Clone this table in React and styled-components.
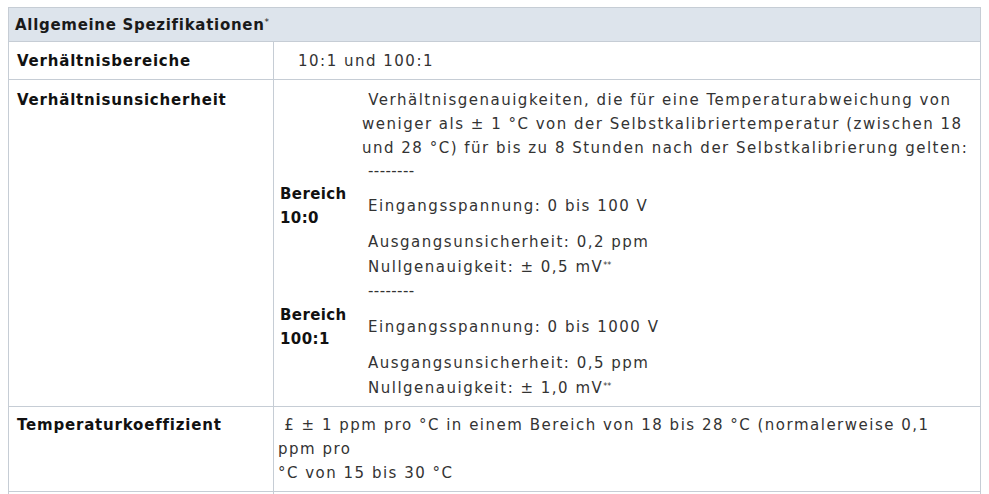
import React from 'react'
import styled, { createGlobalStyle } from 'styled-components'

const GlobalStyle = createGlobalStyle`
    body {
        margin: 7px 8px 8px 8px;
        background: #ffffff;
        font-family: "DejaVu Sans", Verdana, sans-serif;
        color: #222;
    }
`

const SpecTable = styled.table`
    width: 100%;
    border-collapse: collapse;
    font-size: 15px;
`

const HeadCell = styled.th`
    background: #dde4ec;
    border: 1px solid #c6cdd5;
    text-align: left;
    font-weight: bold;
    font-size: 15px;
    letter-spacing: 0.7px;
    height: 32px;
    padding: 1px 6px 0 6px;
    color: #1a1a1a;
    sup {
        font-size: 9px;
        font-weight: normal;
        letter-spacing: 0;
        vertical-align: 5px;
    }
`

const LabelCell = styled.td`
    width: 248px;
    border: 1px solid #c6cdd5;
    vertical-align: top;
    font-weight: bold;
    font-size: 15px;
    letter-spacing: 0.8px;
    line-height: 24px;
    padding: ${p => p.$pt || 7}px 8px 6px 8px;
    color: #111;
`

const ValueCell = styled.td`
    border: 1px solid #c6cdd5;
    vertical-align: top;
    line-height: 24px;
    letter-spacing: 1.5px;
    padding: ${p => p.$pt || 7}px 8px 6px ${p => p.$pl || 6}px;
    color: #333;
`

const Nested = styled.div`
    display: grid;
    grid-template-columns: 82px 1fr;
    align-items: center;
`

const RangeLabel = styled.div`
    grid-column: 1;
    font-weight: bold;
    letter-spacing: 0.4px;
    color: #111;
    line-height: 24px;
`

const RangeText = styled.div`
    grid-column: 2;
    line-height: 24px;
    padding-left: ${p => p.$indent || 0}px;
`

const Dashes = styled.div`
    line-height: ${p => p.$lh || 22}px;
    letter-spacing: 0.4px;
    padding-left: ${p => p.$indent ?? 6}px;
`

const Stars = styled.span`
    font-size: 8px;
    letter-spacing: 0;
    vertical-align: 4px;
`

export default function App() {
    return (
        <>
            <GlobalStyle />
            <SpecTable>
                <thead>
                    <tr>
                        <HeadCell colSpan={2}>Allgemeine Spezifikationen<sup>*</sup></HeadCell>
                    </tr>
                </thead>
                <tbody>
                    <tr>
                        <LabelCell>Verhältnisbereiche</LabelCell>
                        <ValueCell $pl={24}>10:1 und 100:1</ValueCell>
                    </tr>
                    <tr>
                        <LabelCell $pt={8}>Verhältnisunsicherheit</LabelCell>
                        <ValueCell $pt={8}>
                            <Nested>
                                <RangeText>
                                    &nbsp;Verhältnisgenauigkeiten, die für eine Temperaturabweichung von weniger als ± 1 °C von der Selbstkalibriertemperatur (zwischen 18 und 28 °C) für bis zu 8 Stunden nach der Selbstkalibrierung gelten:
                                    <Dashes>--------</Dashes>
                                </RangeText>
                                <RangeLabel>Bereich<br />10:0</RangeLabel>
                                <RangeText $indent={6}>Eingangsspannung: 0 bis 100 V</RangeText>
                                <RangeText $indent={6}>
                                    Ausgangsunsicherheit: 0,2 ppm<br />
                                    Nullgenauigkeit: ± 0,5 mV<Stars>**</Stars>
                                    <Dashes $lh={24} $indent={0}>--------</Dashes>
                                </RangeText>
                                <RangeLabel>Bereich<br />100:1</RangeLabel>
                                <RangeText $indent={6}>Eingangsspannung: 0 bis 1000 V</RangeText>
                                <RangeText $indent={6}>
                                    Ausgangsunsicherheit: 0,5 ppm<br />
                                    Nullgenauigkeit: ± 1,0 mV<Stars>**</Stars>
                                </RangeText>
                            </Nested>
                        </ValueCell>
                    </tr>
                    <tr>
                        <LabelCell $pt={6}>Temperaturkoeffizient</LabelCell>
                        <ValueCell $pt={6} $pl={4}>
                            &nbsp;£ ± 1 ppm pro °C in einem Bereich von 18 bis 28 °C (normalerweise 0,1 ppm pro<br />
                            °C von 15 bis 30 °C
                        </ValueCell>
                    </tr>
                    <tr>
                        <LabelCell>&nbsp;</LabelCell>
                        <ValueCell>&nbsp;</ValueCell>
                    </tr>
                </tbody>
            </SpecTable>
        </>
    )
}
